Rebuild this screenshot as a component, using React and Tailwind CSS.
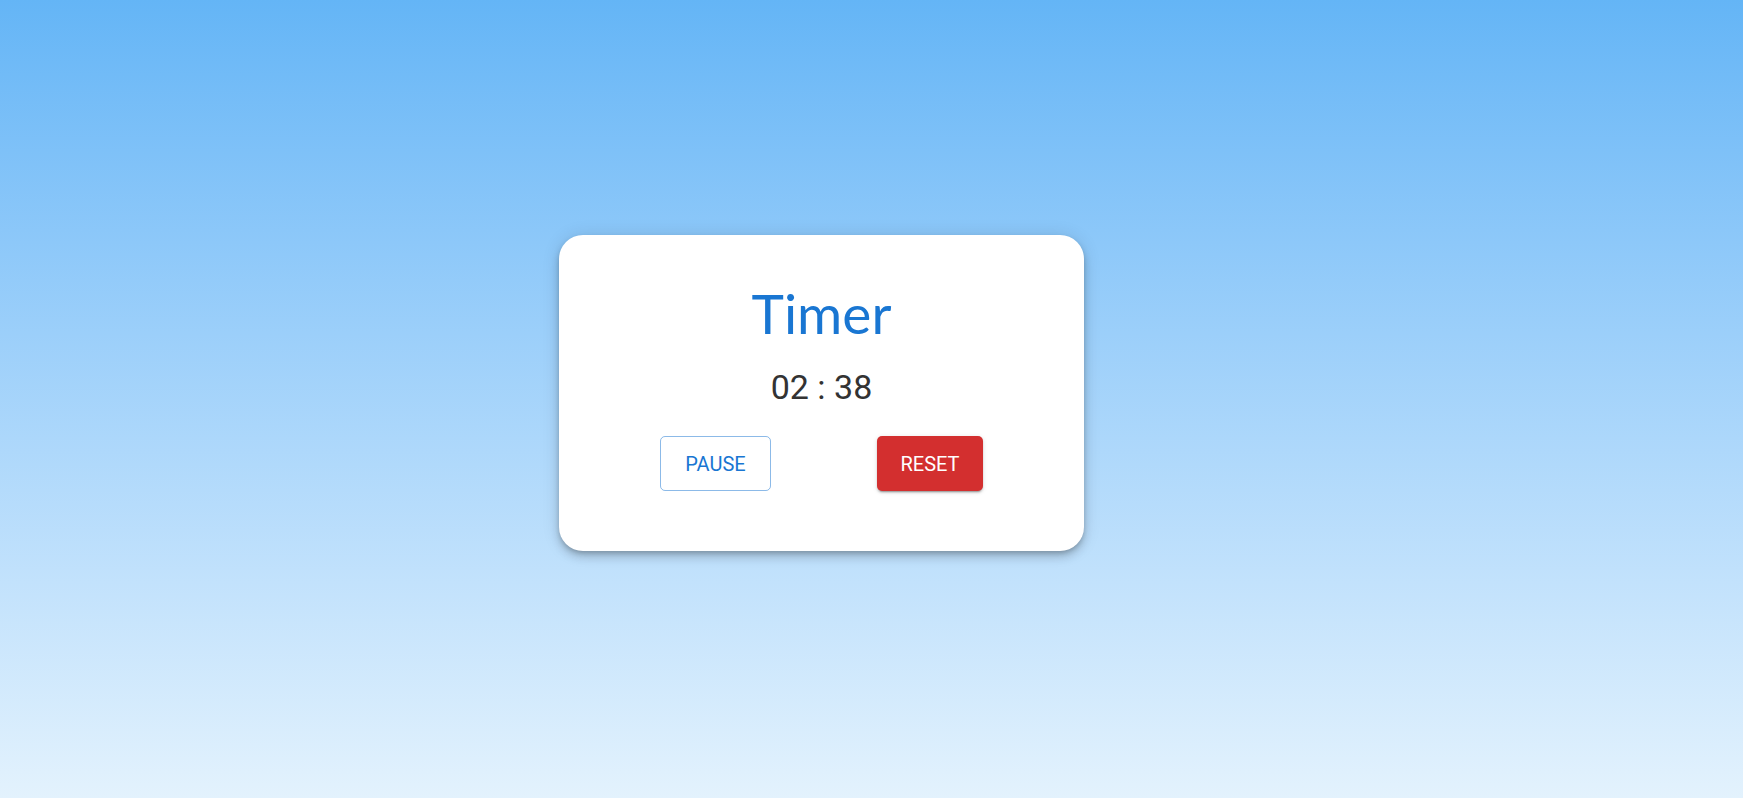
import React from 'react';

const App = () => {
  return (
    <div className="min-h-screen w-full bg-gradient-to-b from-[#64b5f6] to-[#e3f2fd] flex items-center justify-center pr-[100px] pb-[12px]">
      <div className="w-[525px] bg-white rounded-[24px] px-12 pt-[45px] pb-[60px] flex flex-col items-center shadow-[0_3px_5px_-1px_rgba(0,0,0,0.2),0_6px_10px_0_rgba(0,0,0,0.14),0_1px_18px_0_rgba(0,0,0,0.12)]">
        <h1 className="text-[55px] leading-[1.2] text-[#1976d2] font-['Lato',sans-serif] font-normal">
          Timer
        </h1>
        <div className="mt-[21px] text-[34px] leading-[1.235] text-[#333333] font-['Roboto',sans-serif]">
          02 : 38
        </div>
        <div className="mt-[28px] w-full flex justify-around">
          <button className="w-[111px] h-[55px] rounded-[5px] border border-[#1976d2]/50 text-[#1976d2] text-[20px] font-['Roboto',sans-serif] uppercase">
            Pause
          </button>
          <button className="w-[106px] h-[55px] rounded-[5px] bg-[#d32f2f] text-white text-[20px] font-['Roboto',sans-serif] uppercase shadow-[0_3px_1px_-2px_rgba(0,0,0,0.2),0_2px_2px_0_rgba(0,0,0,0.14),0_1px_5px_0_rgba(0,0,0,0.12)]">
            Reset
          </button>
        </div>
      </div>
    </div>
  );
};

export default App;
